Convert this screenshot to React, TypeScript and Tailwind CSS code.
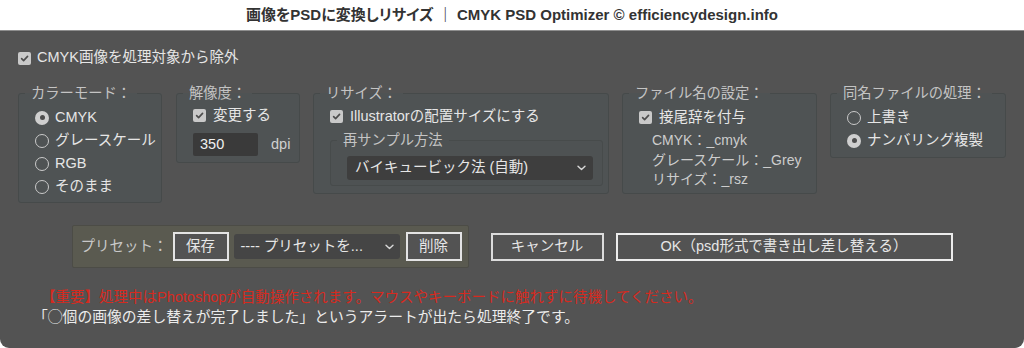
import React from "react";

const font = "font-['Liberation_Sans','Noto_Sans_CJK_JP',sans-serif]";

function Check() {
  return (
    <span className="flex h-[13px] w-[13px] shrink-0 items-center justify-center rounded-[2px] bg-[#c9c9c9]">
      <svg width="9" height="9" viewBox="0 0 10 10" fill="none">
        <path d="M1.8 5.2 4 7.4 8.4 2.6" stroke="#4c4c4c" strokeWidth="1.8" strokeLinecap="round" strokeLinejoin="round" />
      </svg>
    </span>
  );
}

function Radio({ on }: { on?: boolean }) {
  return on ? (
    <span className="flex h-[14px] w-[14px] shrink-0 items-center justify-center rounded-full bg-[#cfcfcf]">
      <span className="h-[5px] w-[5px] rounded-full bg-[#4d4d4d]" />
    </span>
  ) : (
    <span className="h-[14px] w-[14px] shrink-0 rounded-full border-[1.5px] border-[#cacaca]" />
  );
}

function Chevron() {
  return (
    <svg width="9" height="6" viewBox="0 0 9 6" fill="none">
      <path d="M1 1.2 4.5 4.6 8 1.2" stroke="#d8d8d8" strokeWidth="1.4" strokeLinecap="round" strokeLinejoin="round" />
    </svg>
  );
}

function Group({ title, className, children }: { title: string; className: string; children: React.ReactNode }) {
  return (
    <fieldset className={`shrink-0 rounded-[3px] border border-[#464a4a] bg-[#4f5354] ${className}`}>
      <legend className="ml-[6px] px-[6px] text-[14.3px] leading-[20px] text-[#c4c4c4]">{title}</legend>
      {children}
    </fieldset>
  );
}

function Row({ children, className = "" }: { children: React.ReactNode; className?: string }) {
  return <div className={`flex h-[23px] items-center ${className}`}>{children}</div>;
}

export default function App() {
  return (
    <div className={`flex h-[348px] w-[1024px] flex-col bg-white ${font}`}>
      <div className="flex h-[31px] shrink-0 items-center justify-center border-b border-[#8e8e8e] text-[15px] font-bold text-[#333] [font-feature-settings:'palt']">
        画像をPSDに変換しリサイズ ｜ CMYK PSD Optimizer © efficiencydesign.info
      </div>

      <div className="flex flex-1 flex-col rounded-b-[9px] bg-[#535353] px-[18px] pt-[17px] text-[14.5px] text-[#e6e6e6]">
        <div className="flex h-[20px] items-center gap-[6px]">
          <Check />
          <span>CMYK画像を処理対象から除外</span>
        </div>

        <div className="mt-[15px] flex items-start">
          <Group title="カラーモード：" className="w-[144px]">
            <div className="pb-[4px] pl-[16px] pt-[3px]">
              <Row className="gap-[6px]"><Radio on />CMYK</Row>
              <Row className="gap-[6px]"><Radio />グレースケール</Row>
              <Row className="gap-[6px]"><Radio />RGB</Row>
              <Row className="gap-[6px]"><Radio />そのまま</Row>
            </div>
          </Group>

          <Group title="解像度：" className="ml-[14px] w-[124px]">
            <div className="pb-[6px] pl-[16px] pt-[1px]">
              <Row className="gap-[7px]"><Check />変更する</Row>
              <div className="mt-[6px] flex items-center gap-[13px]">
                <div className="flex h-[23px] w-[65px] items-center rounded-[2px] bg-[#3a3a3a] pl-[7px] text-[#f0f0f0]">350</div>
                <span className="text-[#d0d0d0]">dpi</span>
              </div>
            </div>
          </Group>

          <Group title="リサイズ：" className="ml-[13px] w-[296px]">
            <div className="pb-[7px] pl-[16px] pt-[2px]">
              <Row className="gap-[7px]"><Check />Illustratorの配置サイズにする</Row>
              <fieldset className="mt-[2px] w-[273px] rounded-[3px] border border-[#474b4b] bg-[#4e5253]">
                <legend className="ml-[6px] px-[6px] text-[14.3px] leading-[20px] text-[#c4c4c4]">再サンプル方法</legend>
                <div className="pb-[5px] pl-[16px] pt-[6px]">
                  <div className="flex h-[24px] w-[246px] items-center justify-between rounded-[3px] bg-[#3e3e3e] pl-[8px] pr-[7px]">
                    <span>バイキュービック法 (自動)</span>
                    <Chevron />
                  </div>
                </div>
              </fieldset>
            </div>
          </Group>

          <Group title="ファイル名の設定：" className="ml-[13px] w-[195px]">
            <div className="pb-[3px] pl-[16px] pt-[3px]">
              <Row className="gap-[7px]"><Check />接尾辞を付与</Row>
              <div className="mt-[2px] pl-[13px] text-[14px] text-[#cdcdcd]">
                <div className="leading-[19.5px]">CMYK：_cmyk</div>
                <div className="leading-[19.5px]">グレースケール：_Grey</div>
                <div className="leading-[19.5px]">リサイズ：_rsz</div>
              </div>
            </div>
          </Group>

          <Group title="同名ファイルの処理：" className="ml-[13px] w-[176px]">
            <div className="pb-[5px] pl-[16px] pt-[3px]">
              <Row className="gap-[6px]"><Radio />上書き</Row>
              <Row className="gap-[6px]"><Radio on />ナンバリング複製</Row>
            </div>
          </Group>
        </div>

        <div className="mt-[22px] flex items-center justify-center">
          <div className="flex h-[43px] items-center rounded-[2px] border border-[#4c4c46] bg-[#5a5a50] pl-[8px] pr-[6px]">
            <span className="text-[#c8c8c8]">プリセット：</span>
            <button className="ml-[5px] flex h-[29px] w-[56px] items-center justify-center border-2 border-[#e4e4e4] bg-[#535353]">保存</button>
            <div className="ml-[5px] flex h-[25px] w-[166px] items-center justify-between rounded-[3px] bg-[#454545] pl-[7px] pr-[6px]">
              <span>---- プリセットを...</span>
              <Chevron />
            </div>
            <button className="ml-[6px] flex h-[29px] w-[56px] items-center justify-center border-2 border-[#e4e4e4] bg-[#535353]">削除</button>
          </div>
          <button className="ml-[22px] flex h-[28px] w-[113px] items-center justify-center border-2 border-[#dcdcdc]">キャンセル</button>
          <button className="ml-[12px] flex h-[28px] w-[337px] items-center justify-center border-2 border-[#ececec]">OK（psd形式で書き出し差し替える）</button>
        </div>

        <div className="mt-[19px] pl-[15px] leading-[20px]">
          <div className="pl-[8px] text-[14.5px] text-[#d62a1f]">【重要】処理中はPhotoshopが自動操作されます。マウスやキーボードに触れずに待機してください。</div>
          <div className="text-[14.8px] text-[#ececec]">「◯個の画像の差し替えが完了しました」というアラートが出たら処理終了です。</div>
        </div>
      </div>
    </div>
  );
}
